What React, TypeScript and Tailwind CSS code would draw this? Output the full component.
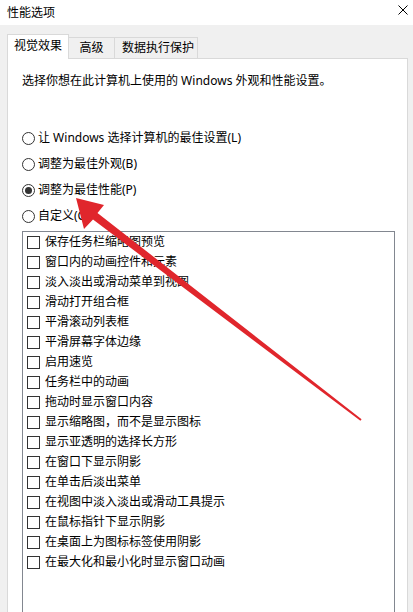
import React from "react";

const items = [
  "保存任务栏缩略图预览",
  "窗口内的动画控件和元素",
  "淡入淡出或滑动菜单到视图",
  "滑动打开组合框",
  "平滑滚动列表框",
  "平滑屏幕字体边缘",
  "启用速览",
  "任务栏中的动画",
  "拖动时显示窗口内容",
  "显示缩略图，而不是显示图标",
  "显示亚透明的选择长方形",
  "在窗口下显示阴影",
  "在单击后淡出菜单",
  "在视图中淡入淡出或滑动工具提示",
  "在鼠标指针下显示阴影",
  "在桌面上为图标标签使用阴影",
  "在最大化和最小化时显示窗口动画",
];

const radios = [
  { label: "让 Windows 选择计算机的最佳设置(L)", checked: false },
  { label: "调整为最佳外观(B)", checked: false },
  { label: "调整为最佳性能(P)", checked: true },
  { label: "自定义(C)", checked: false },
];

function Radio({ checked }: { checked: boolean }) {
  return (
    <span className="w-[13px] h-[13px] rounded-full border border-[#333333] bg-white flex items-center justify-center shrink-0">
      {checked && <span className="w-[7px] h-[7px] rounded-full bg-[#333333]" />}
    </span>
  );
}

export default function App() {
  return (
    <div
      className="relative w-[413px] h-[612px] overflow-hidden bg-[#f0f0f0] text-[12px] text-black flex flex-col"
      style={{ fontFamily: '"Noto Sans", "Noto Sans CJK SC", sans-serif' }}
    >
      {/* title bar */}
      <div className="h-[25px] bg-white flex items-center justify-between pl-[7px] pr-[5px] shrink-0">
        <span className="leading-[16px]">性能选项</span>
        <svg width="10" height="10" viewBox="0 0 10 10" className="mb-[5px]">
          <path d="M0.5 0.5 L9.5 9.5 M9.5 0.5 L0.5 9.5" stroke="#000" strokeWidth="1" fill="none" />
        </svg>
      </div>

      {/* tabs */}
      <div className="flex items-end pl-[7px] pt-[9px] shrink-0">
        <div className="relative z-10 -mb-px h-[25px] w-[62px] bg-white border border-b-0 border-[#d9d9d9] flex items-start justify-center pt-[3px] leading-[16px]">
          视觉效果
        </div>
        <div className="h-[21px] w-[46px] border border-l-0 border-b-0 border-[#d9d9d9] flex items-center justify-center leading-[16px]">
          高级
        </div>
        <div className="h-[21px] w-[83px] border border-l-0 border-b-0 border-[#d9d9d9] flex items-center justify-center pl-[4px] leading-[16px]">
          数据执行保护
        </div>
      </div>

      {/* panel */}
      <div className="ml-[7px] w-[401px] flex-1 bg-white border border-[#d9d9d9] pl-[14px] pt-[14px]">
        <div className="leading-[16px]">选择你想在此计算机上使用的 Windows 外观和性能设置。</div>

        <div className="mt-[36px] flex flex-col">
          {radios.map((r) => (
            <div key={r.label} className="h-[26px] flex items-center gap-[3px] leading-[16px]">
              <Radio checked={r.checked} />
              <span>{r.label}</span>
            </div>
          ))}
        </div>

        <div className="mt-[2px] w-[373px] h-[400px] border border-[#828790] bg-white flex flex-col">
          {items.map((t) => (
            <div key={t} className="h-[20px] flex items-center pl-[4px] gap-[5px] leading-[16px] shrink-0">
              <span className="w-[13px] h-[13px] border border-[#333333] bg-white shrink-0" />
              <span>{t}</span>
            </div>
          ))}
        </div>
      </div>

      {/* annotation arrow */}
      <svg
        className="absolute inset-0 pointer-events-none"
        width="413"
        height="612"
        viewBox="0 0 413 612"
      >
        <polygon
          points="76,198 104,205 97.5,213 361.6,419.2 360.4,420.8 93,219.5 84,229"
          fill="#e0262c"
        />
      </svg>
    </div>
  );
}
